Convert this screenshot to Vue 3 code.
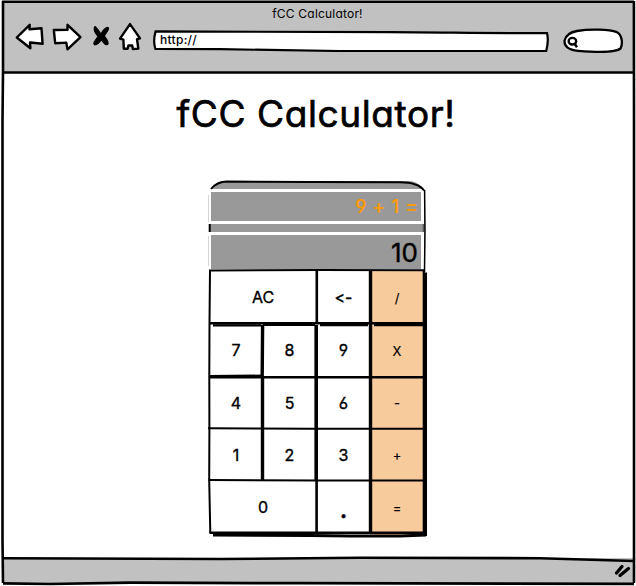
<script setup>
const keys = [
  { label: 'AC', kind: 'wide' },
  { label: '<-', kind: 'back' },
  { label: '/', kind: 'op' },
  { label: '7' }, { label: '8' }, { label: '9' },
  { label: 'X', kind: 'op' },
  { label: '4' }, { label: '5' }, { label: '6' },
  { label: '-', kind: 'op' },
  { label: '1' }, { label: '2' }, { label: '3' },
  { label: '+', kind: 'op' },
  { label: '0', kind: 'wide' },
  { label: '.', kind: 'dot' },
  { label: '=', kind: 'op' },
]
</script>

<template>
  <div class="browser">
    <header class="chrome">
      <div class="caption"><span>fCC Calculator!</span></div>
      <nav class="toolbar">
        <svg class="nav-icons" width="130" height="32" viewBox="14 20 130 32">
          <g fill="#fff" stroke="#000" stroke-width="2.4" stroke-linejoin="round">
            <path d="M16.8 37.5 L29.7 24.8 L29.5 29.2 L41.5 28.3 L42.6 43.8 L30 42.5 L30.4 48.2 Z" />
            <path d="M80.5 37.2 L67.5 24.8 L67.5 29.8 L53.8 30 L55.2 43.2 L66.3 42.6 L67.5 49.3 Z" />
            <path d="M130 24.1 L140 38.4 L137 39.2 L138.3 48.6 L132.9 49 L132.2 45.5 L128.4 45.4 L127.6 48.8 L123.8 48.7 L123.4 39.6 L120 38.6 Z" />
          </g>
          <path d="M96.3 28 C98 29.5 99.5 32.2 101 34.2 C102.5 31 104.3 28.5 107.3 27.4 C109 27.3 108.6 29 107.8 30.3 L104.1 36.1 C106.2 38.7 108.2 40.5 108 43.5 C107.5 45.5 105 44.7 103.7 42.7 L101.3 39.6 C99.5 42.5 97.5 44.7 94.7 44.8 C92.5 43.7 95 40.8 98.2 36.3 C96 34 94.2 31.5 94.3 28.7 C94.3 26.2 95.5 26.2 96.3 28 Z" stroke="#000" stroke-width="1.3" />
        </svg>
        <div class="address">
          <svg class="outline" width="396" height="22" viewBox="153 30 396 22">
            <path d="M155.6 31.4 C250 31.8 330 31.5 390 32.2 C450 32.5 500 33.4 547 33.1 C548.5 39 547.5 46 546.2 51 C480 51.4 410 51 340 51 L220 49.2 L155.4 49 C153.7 44 154 37 155.6 31.4 Z" fill="#fff" stroke="#000" stroke-width="2.2" />
          </svg>
          <span class="url">http://</span>
        </div>
        <svg class="search" width="62" height="28" viewBox="563 27 62 28">
          <path d="M577 31 C590 28.8 609 29.4 617 32.2 C622 34.5 623 44 620.6 48.4 C616 53 596 52.2 578 50.8 C568 50 564 46 564.6 40.5 C566 35 571 32 577 31 Z" fill="#fff" stroke="#000" stroke-width="2.3" />
          <ellipse cx="572.4" cy="41.2" rx="3.8" ry="3.3" fill="none" stroke="#000" stroke-width="2.3" />
          <path d="M574.6 43.6 L577 47.2" stroke="#000" stroke-width="2.5" />
        </svg>
      </nav>
    </header>

    <main class="page">
      <h1><span>fCC Calculator!</span></h1>
      <section class="calculator">
        <div class="display">
          <div class="readout history"><span>9 + 1 =</span></div>
          <div class="readout result"><span>10</span></div>
        </div>
        <div class="keys">
          <button v-for="k in keys" :key="k.label" :class="k.kind"><span>{{ k.label }}</span></button>
        </div>
        <svg class="lines" width="222" height="362" viewBox="207 178 222 362" fill="none" stroke="#000">
          <path d="M211 189 C215 184 220 181.7 227 181.5 L310 182 L400 182.3 C412 182.3 420 185 424 190.5" stroke-width="2" />
          <path d="M209.7 224 V232" stroke-width="2" />
          <path d="M423.3 224 V232" stroke-width="1.2" stroke="#555" />
          <path d="M208.5 195 V222 M208.5 236 V266" stroke-width="0.6" stroke="#bbb" />
          <path d="M424.6 190 L425 230 L424.5 272" stroke-width="1.5" />
          <path d="M209 270.4 L320 269.9 L425 270.2" stroke-width="2" />
          <path d="M210 270 L209.5 323 L209.3 375 L209.4 429 L209.2 480 L210.3 533" stroke-width="2" />
          <path d="M209 323.3 H425" stroke-width="2.6" />
          <path d="M213 325.4 H261 M263 324.9 H315 M320 325.2 H368 M374 325.2 H425" stroke-width="2.2" />
          <path d="M209 376.3 L262 375.8 M209 377.2 H425" stroke-width="2.5" />
          <path d="M208 428.2 L310 428.8 L425 428.7" stroke-width="2" />
          <path d="M208.5 479.9 L320 480.6 L425 480.4" stroke-width="2" />
          <path d="M262.6 325 L262.2 376 M262.5 377 V480" stroke-width="3.4" />
          <path d="M316.8 271 V324 M316.6 480 V533" stroke-width="2.6" />
          <path d="M316.2 325 V480" stroke-width="3.6" />
          <path d="M370.5 271 V533" stroke-width="3.4" />
          <path d="M423.7 271 V533" stroke-width="2" />
          <path d="M425.5 272.5 V536" stroke-width="3" />
          <path d="M209.5 532.8 H425" stroke-width="2.4" />
          <path d="M213 535 L310 535.4 L350 536 L400 536 L426 535" stroke-width="3" />
        </svg>
      </section>
    </main>

    <footer class="status">
      <svg width="20" height="16" viewBox="613 565 20 16" stroke="#000" stroke-linecap="round">
        <path d="M616.5 575 L622 568.5 M620 577.5 L628.5 570.5" stroke-width="3.3" />
      </svg>
    </footer>

    <svg class="frame" width="636" height="586" viewBox="0 0 636 586" fill="none" stroke="#000">
      <path d="M0 0 H636 V2 H0 Z M0 0 H2 V586 H0 Z" fill="#fff" stroke="none" />
      <path d="M2 1.8 H634" stroke-width="2.6" />
      <path d="M3 1 V72 L2.5 120 V540 L3 583" stroke-width="2.6" />
      <path d="M633.9 1 V30 L634 120 V583" stroke-width="2.6" />
      <path d="M3 72.5 H634" stroke-width="2.7" />
      <path d="M3 558.3 L220 559 L360 557.8 L540 558.2 L634 561" stroke-width="2.6" />
      <path d="M3 583.3 L50 584 L130 582.7 L300 583.2 L634 583.8" stroke-width="2.7" />
    </svg>
  </div>
</template>

<style>
body {
  background: #fff;
}
</style>

<style scoped>
.browser {
  position: relative;
  box-sizing: border-box;
  width: 636px;
  height: 586px;
  padding: 2px 2px 2px 3px;
  display: grid;
  grid-template-rows: 70px 1fr 26px;
  overflow: hidden;
  color: #000;
  font-family: Inter, "Liberation Sans", sans-serif;
  font-feature-settings: "cv11" 1, "cv03" 1, "cv04" 1, "calt" 0;
}
.chrome,
.status {
  background: #c1c1c1;
}
.caption {
  height: 23px;
  line-height: 23px;
  padding-right: 2px;
  text-align: center;
  font-size: 12px;
}
.caption span {
  letter-spacing: 0.2px;
}
.toolbar {
  display: flex;
  align-items: flex-start;
  padding-left: 11px;
}
.nav-icons {
  margin-top: -5px;
  flex: none;
}
.address {
  position: relative;
  width: 396px;
  height: 22px;
  margin: 5px 14px 0 9px;
  flex: none;
}
.outline {
  display: block;
}
.url {
  position: absolute;
  left: 7px;
  top: 2px;
  font-size: 12px;
  font-weight: 500;
  line-height: 16px;
  letter-spacing: 0.3px;
}
.search {
  margin-top: 2px;
  flex: none;
}
.page {
  display: flex;
  flex-direction: column;
  align-items: center;
}
h1 {
  margin: 18px 5px 0 0;
  height: 48px;
  line-height: 48px;
  font-size: 37px;
  font-weight: 400;
  letter-spacing: 0.6px;
  -webkit-text-stroke: 0.7px #000;
  white-space: nowrap;
}
.calculator {
  position: relative;
  width: 216px;
  height: 356px;
  margin: 43px 3px 0 0;
}
.display {
  box-sizing: border-box;
  height: 90px;
  padding-top: 8px;
  display: flex;
  flex-direction: column;
  gap: 8px;
  background: #999;
  border-radius: 16px 16px 0 0;
}
.readout {
  box-sizing: border-box;
  height: 35px;
  margin: 0 1px 0 -1px;
  border: 3px solid #fff;
  display: flex;
  justify-content: flex-end;
  align-items: center;
  white-space: nowrap;
}
.history {
  color: #ff9900;
  font-size: 19px;
  font-weight: 500;
  word-spacing: 1px;
  -webkit-text-stroke: 0.2px #ff9900;
  padding-right: 3px;
}
.result {
  height: 38px;
  border-bottom-width: 1px;
  font-size: 26px;
  -webkit-text-stroke: 0.4px #000;
  padding-right: 3px;
}
.keys {
  display: grid;
  grid-template-columns: 53px 54px 54px 55px;
  grid-template-rows: 53px 53px 52px 52px 54px;
}
.keys button {
  margin: 0;
  padding: 0 0 1px 1px;
  border: 0;
  background: #fff;
  color: #000;
  font-family: inherit;
  font-feature-settings: inherit;
  font-size: 16px;
  -webkit-text-stroke: 0.35px #000;
}
.keys .wide {
  grid-column: span 2;
}
.keys .wide:nth-last-child(3) {
  padding-bottom: 3px;
}
.keys .op {
  background: #f8cb9c;
  font-size: 13px;
  padding: 0 1px 0 0;
  -webkit-text-stroke-width: 0.15px;
}
.keys .dot {
  font-size: 28px;
}
.lines {
  position: absolute;
  left: -2px;
  top: -3px;
}
.status {
  display: flex;
  justify-content: flex-end;
  align-items: center;
  padding-right: 1px;
}
.frame {
  position: absolute;
  left: 0;
  top: 0;
  pointer-events: none;
}
</style>
